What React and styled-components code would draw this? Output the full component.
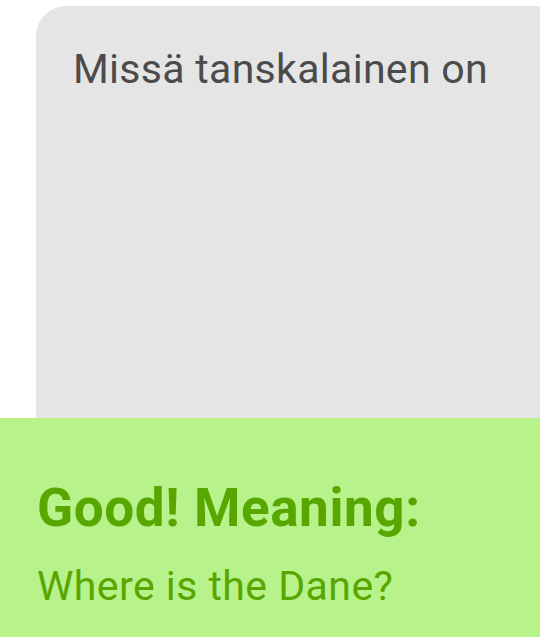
import styled, { createGlobalStyle } from "styled-components"

const GlobalStyle = createGlobalStyle`
  html, body {
    margin: 0;
    padding: 0;
    background: #ffffff;
    overflow: hidden;
  }
  body {
    font-family: Roboto, "Noto Sans", sans-serif;
  }
`

const Screen = styled.div`
  width: 540px;
  height: 637px;
  display: flex;
  flex-direction: column;
  overflow: hidden;
`

const Prompt = styled.section`
  height: 412px;
  margin: 6px 0 0 36px;
  background-color: #e5e5e5;
  border-radius: 30px 0 0 0;
  padding: 39px 0 0 37px;
  box-sizing: border-box;
`

const PromptText = styled.p`
  margin: 0;
  color: #4b4b4b;
  font-size: 41px;
  line-height: 48px;
  letter-spacing: 0.3px;
`

const Feedback = styled.section`
  flex: 1;
  background-color: #b8f28b;
  padding: 60px 0 0 37px;
  display: flex;
  flex-direction: column;
  gap: 24px;
`

const FeedbackTitle = styled.h2`
  margin: 0;
  color: #58a700;
  font-size: 53px;
  font-weight: 700;
  line-height: 60px;
  letter-spacing: 0.6px;
`

const FeedbackText = styled.p`
  margin: 0;
  color: #58a700;
  font-size: 41px;
  line-height: 48px;
  letter-spacing: 0.45px;
`

export default function App() {
  return (
    <>
      <GlobalStyle />
      <Screen>
        <Prompt>
          <PromptText>Missä tanskalainen on</PromptText>
        </Prompt>
        <Feedback>
          <FeedbackTitle>Good! Meaning:</FeedbackTitle>
          <FeedbackText>Where is the Dane?</FeedbackText>
        </Feedback>
      </Screen>
    </>
  )
}
